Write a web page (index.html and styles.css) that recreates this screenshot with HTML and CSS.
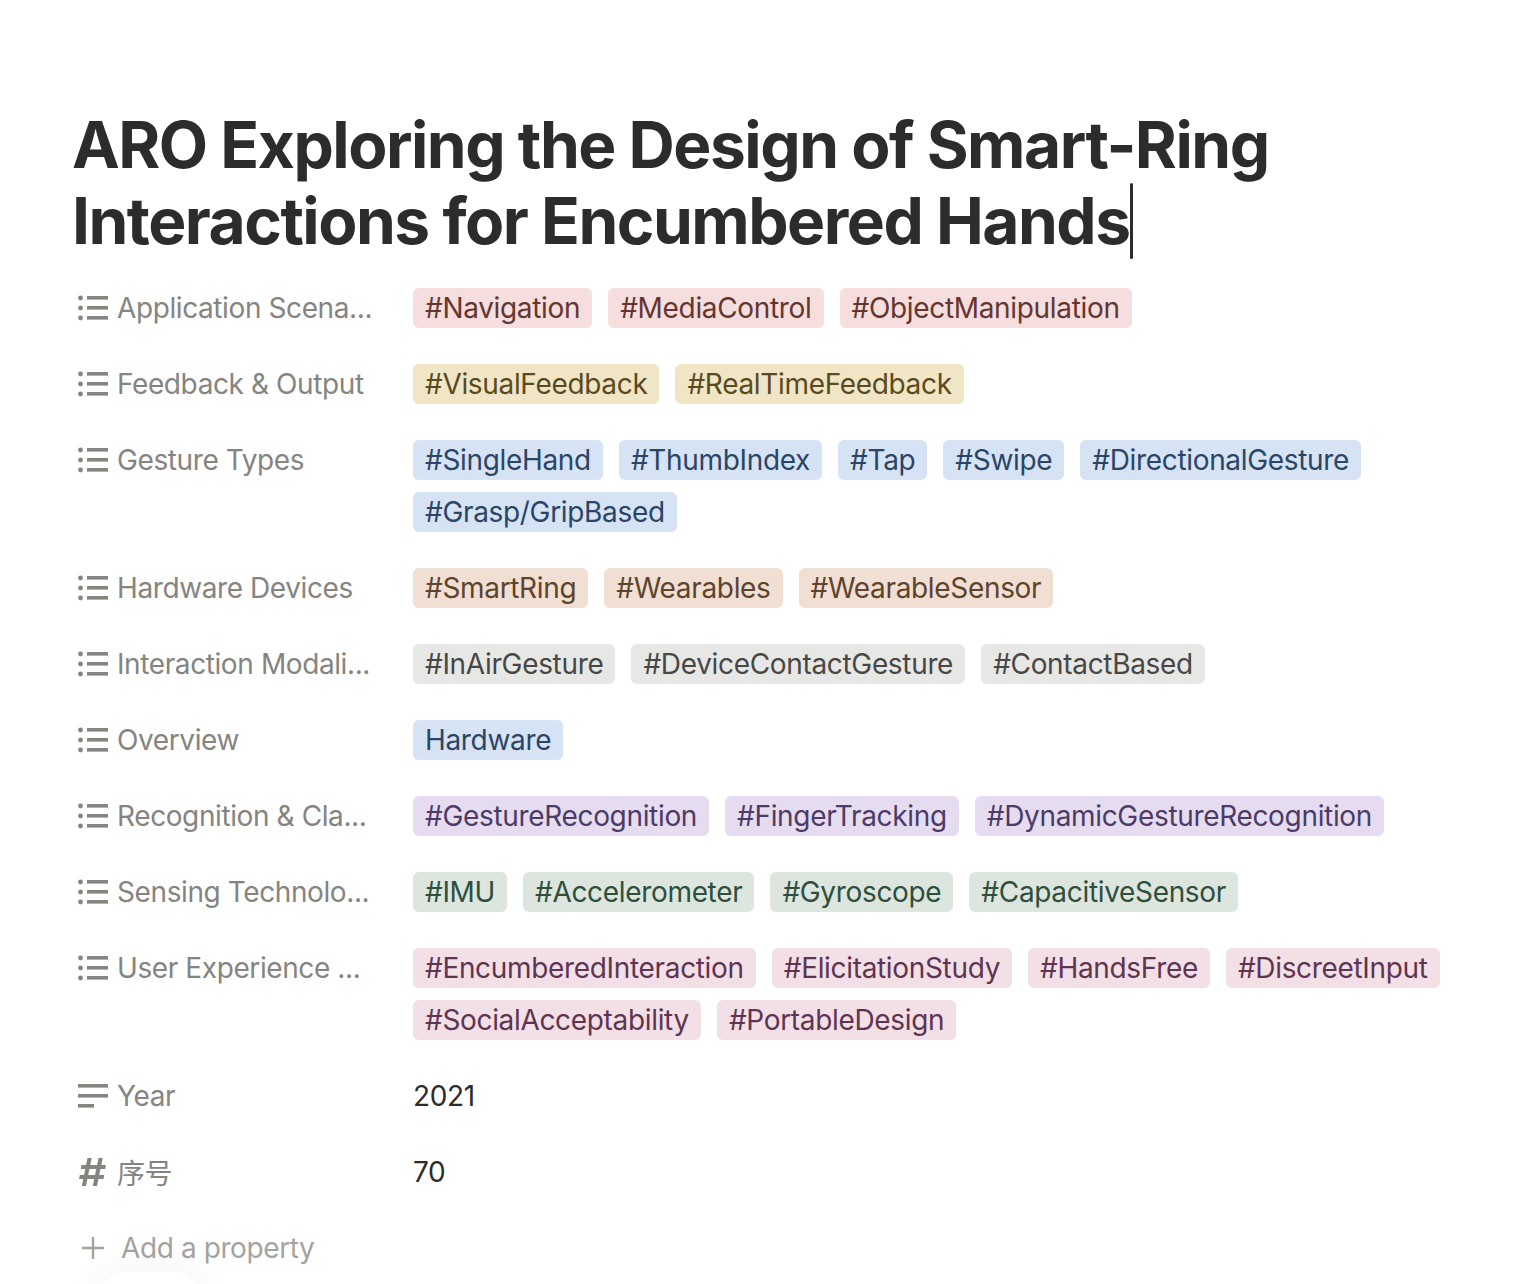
FILE: index.html
```html
<!DOCTYPE html>
<html lang="en">
<head>
<meta charset="utf-8">
<title>ARO Exploring the Design of Smart-Ring Interactions for Encumbered Hands</title>
<link rel="stylesheet" href="styles.css">
</head>
<body>
<svg class="defs" width="0" height="0" aria-hidden="true">
  <symbol id="i-list" viewBox="0 0 30 26">
    <circle cx="2.5" cy="3" r="2.4"/><circle cx="2.5" cy="13" r="2.4"/><circle cx="2.5" cy="23" r="2.4"/>
    <rect x="9" y="1" width="21" height="3.600"/><rect x="9" y="11" width="21" height="3.600"/><rect x="9" y="21" width="21" height="3.600"/>
  </symbol>
  <symbol id="i-text" viewBox="0 0 30 26">
    <rect x="0" y="1" width="30" height="3.600"/><rect x="0" y="11" width="30" height="3.600"/><rect x="0" y="21" width="16" height="3.600"/>
  </symbol>
  <symbol id="i-hash" viewBox="0 0 30 30">
    <path d="M9.500 1h4.200L8 29H3.800zM20.500 1h4.200L19 29h-4.200z"/><path d="M3.500 8h24.500l-.8 4H2.700zM1.800 18h24.500l-.8 4H1z"/>
  </symbol>
</svg>
<main class="page">
  <h1 class="title"><span class="title-text">ARO Exploring the Design of Smart-Ring Interactions for Encumbered Hands</span><span class="caret"></span></h1>
  <div class="props">
    <div class="prop">
      <div class="label"><svg class="icon"><use href="#i-list"/></svg><span>Application Scena...</span></div>
      <div class="value"><span class="tag red">#Navigation</span><span class="tag red">#MediaControl</span><span class="tag red">#ObjectManipulation</span></div>
    </div>
    <div class="prop">
      <div class="label"><svg class="icon"><use href="#i-list"/></svg><span>Feedback &amp; Output</span></div>
      <div class="value"><span class="tag yellow">#VisualFeedback</span><span class="tag yellow">#RealTimeFeedback</span></div>
    </div>
    <div class="prop">
      <div class="label"><svg class="icon"><use href="#i-list"/></svg><span>Gesture Types</span></div>
      <div class="value"><span class="tag blue">#SingleHand</span><span class="tag blue">#ThumbIndex</span><span class="tag blue">#Tap</span><span class="tag blue">#Swipe</span><span class="tag blue">#DirectionalGesture</span><span class="tag blue">#Grasp/GripBased</span></div>
    </div>
    <div class="prop">
      <div class="label"><svg class="icon"><use href="#i-list"/></svg><span>Hardware Devices</span></div>
      <div class="value"><span class="tag brown">#SmartRing</span><span class="tag brown">#Wearables</span><span class="tag brown">#WearableSensor</span></div>
    </div>
    <div class="prop">
      <div class="label"><svg class="icon"><use href="#i-list"/></svg><span>Interaction Modali...</span></div>
      <div class="value"><span class="tag gray">#InAirGesture</span><span class="tag gray">#DeviceContactGesture</span><span class="tag gray">#ContactBased</span></div>
    </div>
    <div class="prop">
      <div class="label"><svg class="icon"><use href="#i-list"/></svg><span>Overview</span></div>
      <div class="value"><span class="tag blue">Hardware</span></div>
    </div>
    <div class="prop">
      <div class="label"><svg class="icon"><use href="#i-list"/></svg><span>Recognition &amp; Cla...</span></div>
      <div class="value"><span class="tag purple">#GestureRecognition</span><span class="tag purple">#FingerTracking</span><span class="tag purple">#DynamicGestureRecognition</span></div>
    </div>
    <div class="prop">
      <div class="label"><svg class="icon"><use href="#i-list"/></svg><span>Sensing Technolo...</span></div>
      <div class="value"><span class="tag green">#IMU</span><span class="tag green">#Accelerometer</span><span class="tag green">#Gyroscope</span><span class="tag green">#CapacitiveSensor</span></div>
    </div>
    <div class="prop">
      <div class="label"><svg class="icon"><use href="#i-list"/></svg><span>User Experience ...</span></div>
      <div class="value"><span class="tag pink">#EncumberedInteraction</span><span class="tag pink">#ElicitationStudy</span><span class="tag pink">#HandsFree</span><span class="tag pink">#DiscreetInput</span><span class="tag pink">#SocialAcceptability</span><span class="tag pink">#PortableDesign</span></div>
    </div>
    <div class="prop">
      <div class="label"><svg class="icon"><use href="#i-text"/></svg><span>Year</span></div>
      <div class="value plain">2021</div>
    </div>
    <div class="prop">
      <div class="label"><svg class="icon icon-hash"><use href="#i-hash"/></svg><span>序号</span></div>
      <div class="value plain">70</div>
    </div>
    <div class="add">
      <svg class="plus" viewBox="0 0 22 22"><path d="M9.800 0h2.400v9.800H22v2.400h-9.800V22H9.800v-9.800H0V9.800h9.800z"/></svg>
      <span>Add a property</span>
    </div>
  </div>
</main>
<div class="floater"></div>
</body>
</html>
```

FILE: styles.css
```css
* { box-sizing: border-box; }
html, body { margin: 0; height: 100%; }
body {
  background: #fff;
  color: #2c2c2b;
  font-family: Inter, "Noto Sans CJK SC", sans-serif;
  overflow: hidden;
  position: relative;
}
.defs { position: absolute; }
.page { padding: 107px 60px 0 72px; }
.title {
  margin: 0 0 29px;
  font-size: 64px;
  line-height: 76px;
  font-weight: 700;
  letter-spacing: -1.48px;
  color: #2c2c2b;
  max-width: 1250px;
}
.caret {
  display: inline-block;
  width: 3px;
  height: 76px;
  background: #2c2c2b;
  vertical-align: top;
  border-radius: 2px;
}
.props { display: flex; flex-direction: column; gap: 36px; }
.prop { display: flex; align-items: flex-start; }
.label {
  flex: 0 0 341px;
  height: 40px;
  display: flex;
  align-items: center;
  gap: 9px;
  padding-left: 6px;
  font-size: 28px;
  letter-spacing: -0.4px;
  color: #85847f;
  white-space: nowrap;
}
.icon { width: 30px; height: 26px; fill: #85847f; flex: none; }
.icon-hash { height: 30px; }
.value {
  flex: 1;
  display: flex;
  flex-wrap: wrap;
  gap: 12px 16px;
  font-size: 28px;
  letter-spacing: -0.33px;
}
.value.plain { line-height: 40px; color: #2c2c2b; }
.tag {
  height: 40px;
  line-height: 40px;
  padding: 0 12px;
  border-radius: 6px;
  white-space: nowrap;
}
.red { background: #f5dedd; color: #66352f; }
.yellow { background: #f0e6c6; color: #5a4a22; }
.blue { background: #d5e3f5; color: #2c4566; }
.brown { background: #f0dfd2; color: #5f432d; }
.gray { background: #e7e7e5; color: #484745; }
.purple { background: #e6dcef; color: #4d3a68; }
.green { background: #dce6df; color: #2f4f3c; }
.pink { background: #f3dfe6; color: #5f3450; }
.add {
  height: 40px;
  display: flex;
  align-items: center;
  gap: 17px;
  padding-left: 10px;
  font-size: 28px;
  letter-spacing: -0.4px;
  color: #a4a39d;
}
.plus { width: 22px; height: 22px; fill: #a4a39d; flex: none; }
.floater {
  position: absolute;
  left: 100px;
  top: 1272px;
  width: 100px;
  height: 60px;
  background: #fff;
  border-radius: 24px;
  box-shadow: 0 0 40px rgba(0, 0, 0, .06);
}
```
